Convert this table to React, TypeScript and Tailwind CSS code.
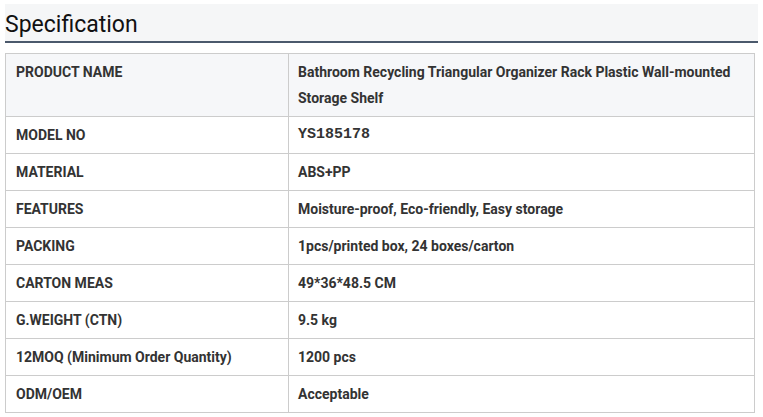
const rows: [string, string][] = [
  ["MODEL NO", "YS185178"],
  ["MATERIAL", "ABS+PP"],
  ["FEATURES", "Moisture-proof, Eco-friendly, Easy storage"],
  ["PACKING", "1pcs/printed box, 24 boxes/carton"],
  ["CARTON MEAS", "49*36*48.5 CM"],
  ["G.WEIGHT (CTN)", "9.5 kg"],
  ["12MOQ (Minimum Order Quantity)", "1200 pcs"],
  ["ODM/OEM", "Acceptable"],
];

export default function App() {
  return (
    <div className="w-[763px] h-[417px] bg-white px-[5px] pt-1 font-['Roboto',sans-serif]">
      <div className="h-[39px] bg-[#f5f6f7] border-b-2 border-[#4b596c]">
        <h2 className="text-[23px] leading-[42px] text-[#111] font-normal">Specification</h2>
      </div>
      <table className="mt-[10px] w-[750px] border-collapse text-[14px] text-[#333] font-bold leading-[26px]">
        <tbody>
          <tr className="bg-[#f6f7f9]">
            <td className="w-[283px] border border-[#cccccc] px-[10px] pt-[5px] pb-[30px] align-top">
              PRODUCT NAME
            </td>
            <td className="border border-[#cccccc] px-[9px] py-[5px]">
              Bathroom Recycling Triangular Organizer Rack Plastic Wall-mounted Storage Shelf
            </td>
          </tr>
          {rows.map(([k, v]) => (
            <tr key={k} className="h-[37px]">
              <td className="border border-[#cccccc] px-[10px] py-0">{k}</td>
              <td className="border border-[#cccccc] px-[9px] py-0">
                {k === "MODEL NO" ? (
                  <span className="block font-['Liberation_Mono',monospace] text-[15px] leading-[26px]">{v}</span>
                ) : (
                  v
                )}
              </td>
            </tr>
          ))}
        </tbody>
      </table>
    </div>
  );
}
